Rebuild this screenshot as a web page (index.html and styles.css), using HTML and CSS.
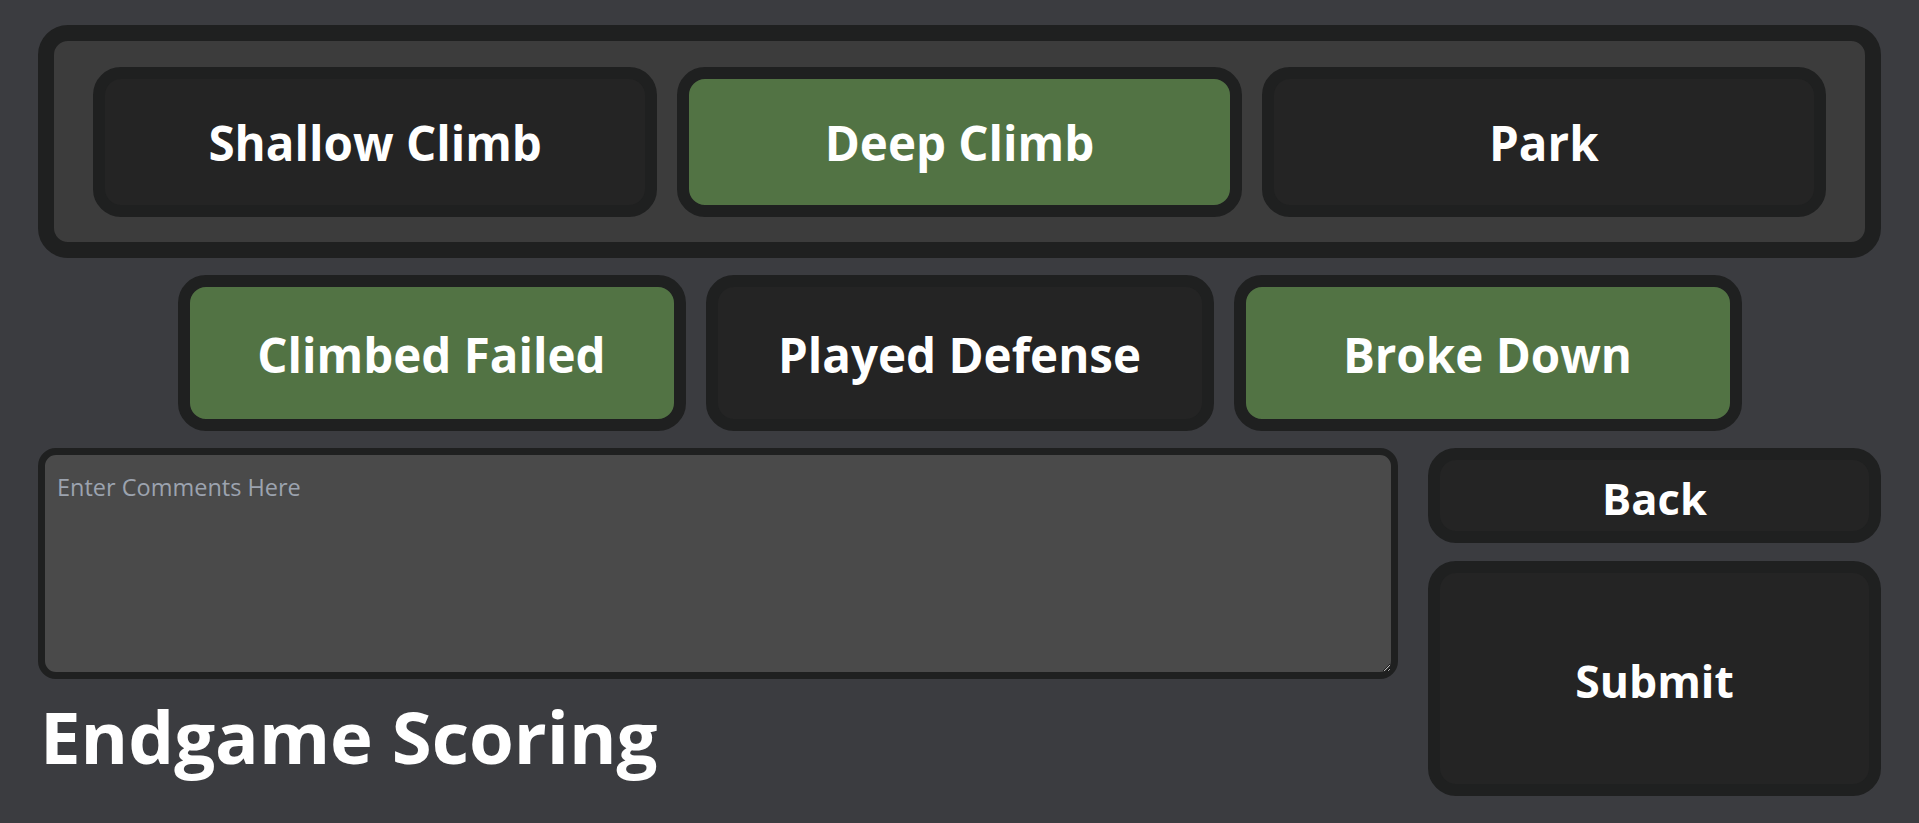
FILE: index.html
```html
<!DOCTYPE html>
<html lang="en">
<head>
<meta charset="utf-8">
<title>Endgame Scoring</title>
<link rel="stylesheet" href="styles.css">
</head>
<body>
<main class="page">
  <section class="climb-panel">
    <button class="btn btn-climb">Shallow Climb</button>
    <button class="btn btn-climb is-on">Deep Climb</button>
    <button class="btn btn-climb">Park</button>
  </section>
  <section class="flag-row">
    <button class="btn btn-flag is-on">Climbed Failed</button>
    <button class="btn btn-flag">Played Defense</button>
    <button class="btn btn-flag is-on">Broke Down</button>
  </section>
  <section class="bottom">
    <div class="left-col">
      <textarea class="comments" placeholder="Enter Comments Here"></textarea>
      <h1 class="title">Endgame Scoring</h1>
    </div>
    <div class="right-col">
      <button class="btn btn-back">Back</button>
      <button class="btn btn-submit">Submit</button>
    </div>
  </section>
</main>
</body>
</html>
```

FILE: styles.css
```css
* { box-sizing: border-box; }

html, body {
  margin: 0;
  height: 100%;
}

body {
  background: #3b3c40;
  font-family: "Open Sans", "Noto Sans", "Liberation Sans", sans-serif;
  color: #ffffff;
  overflow: hidden;
}

.page {
  padding: 25px 38px 0;
}

.climb-panel {
  display: flex;
  gap: 20px;
  border: 16px solid #1f2020;
  border-radius: 30px;
  background: #3c3c3c;
  padding: 25.5px 39px;
}

.btn {
  display: flex;
  align-items: center;
  justify-content: center;
  margin: 0;
  padding: 3px 0 0;
  border: 12.5px solid #1f2020;
  border-radius: 28px;
  background: #242424;
  color: #ffffff;
  font-family: inherit;
  font-weight: 700;
  font-size: 47.5px;
  line-height: 1;
  cursor: pointer;
}

.btn.is-on {
  background: #527344;
}

.btn-climb {
  flex: 1 1 0;
  height: 150px;
}

.flag-row {
  display: flex;
  justify-content: center;
  gap: 20px;
  margin-top: 17px;
}

.btn-flag {
  width: 508px;
  height: 156px;
}

.bottom {
  display: grid;
  grid-template-columns: 1360px 453px;
  column-gap: 30px;
  margin-top: 17px;
}

.comments {
  display: block;
  width: 100%;
  height: 231px;
  border: 7px solid #1f2020;
  border-radius: 18px;
  background: #4a4a4a;
  padding: 16px 12px;
  color: #e5e5e5;
  font-family: inherit;
  font-size: 23.5px;
  outline: none;
}

.comments::placeholder {
  color: #9ca3af;
}

.title {
  margin: 21px 0 0 2px;
  font-size: 72.5px;
  font-weight: 700;
  line-height: 1;
}

.right-col {
  display: flex;
  flex-direction: column;
  gap: 18px;
}

.btn-back {
  height: 95px;
  padding-top: 7px;
  font-size: 43.5px;
}

.btn-submit {
  height: 235px;
  padding-top: 5px;
  font-size: 44.5px;
}
```
